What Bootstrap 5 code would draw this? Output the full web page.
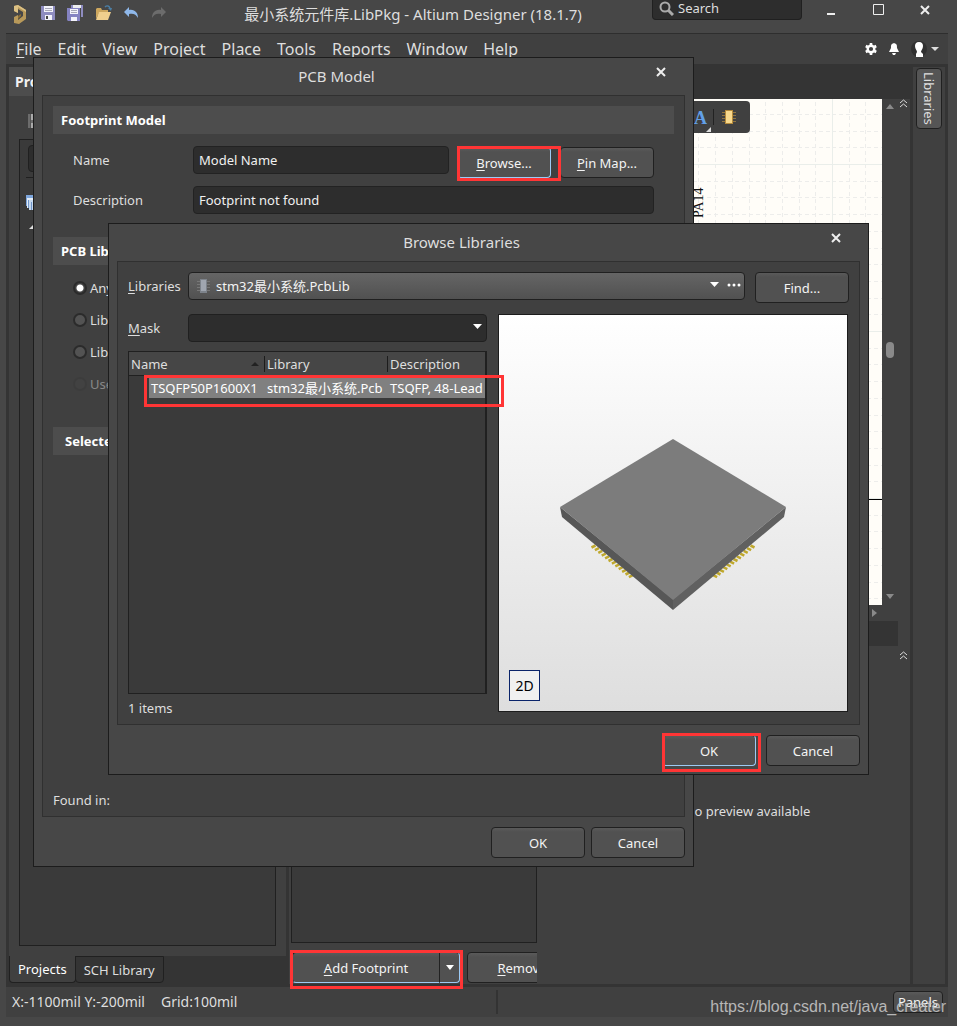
<!DOCTYPE html>
<html lang="en">
<head>
<meta charset="utf-8">
<meta name="viewport" content="width=device-width, initial-scale=1">
<title>最小系统元件库.LibPkg - Altium Designer (18.1.7)</title>
<link href="https://cdn.jsdelivr.net/npm/bootstrap@5.3.0/dist/css/bootstrap.min.css" rel="stylesheet">
<style>
:root{--frame:#474747;--panel:#404040;--gutter:#343434;--well:#3a3a3a;--edge:#202020;--field:#2d2d2d;--ink:#dedede}
body{background:var(--frame);color:var(--ink);font:13px/20px "Noto Sans","Noto Sans CJK SC",sans-serif;height:100vh;min-height:1000px;overflow:hidden}
button,input,select{font:inherit;color:inherit}
svg{display:block;flex:none}
u{text-underline-offset:2px}
.app{height:100%;padding:0 9px 9px 6px}
.titlebar{height:33px}
.titlebar h1{font-size:15px;line-height:20px;font-weight:400}
.plain{background:none;border:0;padding:0}
.tools{gap:12px;padding-left:7px}
.logo{margin-top:5px}
.finder{width:150px;height:20px;background:var(--field);border:1px solid var(--edge);border-top:0;border-radius:0 0 4px 4px;padding:0 6px 3px}
.finder input{background:none;border:0;outline:0;padding:0;min-width:0;line-height:16px}
.finder input::placeholder{color:var(--ink);opacity:1}
.winctl{width:146px;padding:0 18px 0 24px}
.menubar{height:31px;background:var(--panel);border-top:1px solid #2e2e2e;padding:0 9px 0 10px}
.menubar nav{gap:16px;font-size:16px}
.menubar a{color:var(--ink);text-decoration:none}
.work{background:var(--gutter);padding:0 3px;gap:3px;min-height:0}
.dock-left{width:277px;padding:3px 0 4px}
.dock-head{height:29px;background:#4d4d4d;padding-left:6px;font-weight:700;line-height:29px;font-size:14px;color:#f2f2f2}
.dock-body{background:var(--panel);padding:0 10px 10px;min-height:0}
.dock-tools{height:43px;padding:18px 0 0 9px}
.well{background:var(--well);border:1px solid var(--edge)}
.tree-field{height:27px;margin:5px 8px;background:var(--field);border:1px solid var(--edge);border-radius:4px}
.tree-icons{margin:5px 6px 0;border-top:1px solid var(--edge);padding-top:17px}
.dock-tabs button{height:27px;border:1px solid var(--edge);border-top:0;border-radius:0 0 4px 4px;background:none;padding:0 8px;margin-right:-1px}
.dock-tabs .on{background:var(--panel);color:#fff}
.dock-tabs button+button{border-top:1px solid var(--edge)}
.sheet{height:506px;background:#fffdf8}
.doc-strip{height:35px}
.doc{background:var(--panel);min-height:0;margin-bottom:3px}
.scrolls{width:28px;position:relative}
.split-strip{height:25px;background:var(--gutter);margin-right:12px}
.hscroll{height:16px;padding-right:33px}
.sheet-tools{position:absolute;right:160px;top:2px;height:32px;width:90px;background:var(--panel);border-radius:4px;padding-right:14px;gap:8px}
.models{width:248px;overflow:hidden;padding:0 0 0 2px}
.model-buttons{height:32px;margin-top:9px;gap:7px;padding-left:1px}
.dock-right{width:32px;background:var(--panel);margin-top:3px;margin-bottom:3px;padding:1px 3px}
.side-tab{writing-mode:vertical-rl;width:26px;height:61px;background:#555;border:1px solid var(--edge);border-radius:4px;padding:0;line-height:20px}
.status{height:30px;background:var(--panel);padding:0 5px 0 6px}
.status-text{width:52%;font-size:14px}
.status .rule{width:2px;height:24px;background:#333}
.btn-dk{height:31px;min-width:94px;background:linear-gradient(#5a5a5a,#515151 4px,#515151);border:1px solid var(--edge);border-radius:4px;color:#f4f4f4;padding:0 8px;white-space:nowrap}
.btn-dk.focus{border-color:#222 #9ccaf5 #9ccaf5 #222}
.note{position:absolute;border:3px solid #ff3535;pointer-events:none;z-index:2}
.window{position:absolute;background:var(--frame);border:1px solid #1c1c1c;padding:0 8px 8px}
.window-head{height:37px}
.window-head h2{font-size:15px;line-height:37px;font-weight:400;margin:0;padding-right:22px}
.window-head button{width:16px;height:16px;margin-top:6px}
.window-body{background:var(--panel);border:1px solid #303030;padding:10px 10px 6px}
.window-foot{padding-top:10px;gap:6px}
.pcb{left:33px;top:57px;width:661px;height:810px}
.libs{left:108px;top:223px;width:761px;height:552px}
.section-head{height:28px;background:#4d4d4d;color:#fff;font-weight:700;font-size:13px;line-height:28px;margin:0;padding-left:8px}
.fields{padding:12px 20px 23px;display:grid;row-gap:12px}
.fields label{width:120px;line-height:28px;flex:none}
.fields .btn-dk{margin:1px 0 -4px}
.field{height:28px;background:var(--field);border:1px solid #222;border-radius:4px;padding:0 5px 1px;outline:0;color:#f0f0f0}
.choices{padding:13px 20px 33px;display:grid;row-gap:12px}
.choices label{height:20px;gap:3px;line-height:22px}
.choices input{appearance:none;width:14px;height:14px;margin:0;border:2px solid #2b2b2b;border-radius:50%;background:#535353;flex:none}
.choices input:checked{background:radial-gradient(#fff 3px,#444 4px)}
.choices .off{opacity:.45}
.choices .off input{opacity:.3}
.picker{appearance:none;height:28px;width:100%;border:1px solid var(--edge);border-radius:4px;color:#f4f4f4;padding:0 0 0 27px;outline:0}
.picker.grad{background:linear-gradient(#656565,#515151)}
.picker.flat{background:var(--field)}
.lead-label{width:60px;line-height:28px;flex:none}
.left-col{width:359px}
.list{height:343px;border-right-width:2px;overflow:hidden;margin-top:9px}
.count{padding-top:4px;margin-bottom:-8px}
.list table{table-layout:fixed;width:357px;line-height:20px;color:var(--ink);border-collapse:separate;border-spacing:0}
.list th{font-weight:400;height:24px;padding:0 2px;background:#464646;border-bottom:1px solid var(--edge);position:relative}
.list th+th::before{content:"";position:absolute;left:-1px;top:4px;height:16px;width:1px;background:#1c1c1c}
.list td{height:22px;padding:0 2px;white-space:nowrap;overflow:hidden;background:#808080;color:#fff;line-height:20px;border-top:1px solid var(--well)}
.list td:first-child{background:none}
.view3d{background:linear-gradient(#fff,#dedede);border:1px solid #1c1c1c;height:398px;margin-right:1px}
.view3d svg.body3d{width:100%;height:100%}
.flip{position:absolute;left:10px;bottom:10px;width:31px;height:31px;background:#f0f0f0;border:1px solid #0a246a;color:#000;padding:0;font-size:14px}
.stamp{position:absolute;right:11px;bottom:7px;font:16px/24px "Liberation Sans",sans-serif;color:#c4c4c4;opacity:.9;z-index:3}
</style>
</head>
<body>
<div class="app d-flex flex-column position-relative">
  <header class="titlebar d-flex align-items-start">
    <div class="tools d-flex align-items-center">
      <svg class="logo" width="16" height="20" viewBox="0 0 16 20"><path d="M1 1 5 0l8 5v9l-7 5-5-1v-6l4-2v5l5-4V7L5 4v4L1 6z" fill="#b8995a"/><path d="M1 1 5 0l8 5v2L5 2v6L1 6z" fill="#dcc184"/><path d="M5 11l3-2v2l-3 3z" fill="#8a6d35"/></svg>
      <button class="plain" aria-label="Save"><svg width="14" height="14" viewBox="0 0 14 14"><path d="M0 0h14v14H1l-1-1z" fill="#8e8cc0"/><path d="M3 0h9v6H3zM4 9h7v5H4z" fill="#f3f3fb"/><path d="M4 2h7v1H4zM4 4h7v1H4z" fill="#a8a8b8"/><path d="M5 10h2v3H5z" fill="#444"/></svg></button>
      <button class="plain" aria-label="Save all"><svg width="16" height="16" viewBox="0 0 16 16"><path d="M4 0h12v12h-2V3H4z" fill="#8e8cc0"/><path d="M6 0h8v3H6z" fill="#eee"/><path d="M0 3h13v13H1l-1-1z" fill="#8583c2"/><path d="M3 4h8v5H3zM4 12h6v4H4z" fill="#f3f3fb"/><path d="M4 5h6v1H4zM4 7h6v1H4z" fill="#a8a8b8"/></svg></button>
      <button class="plain" aria-label="Open"><svg width="17" height="16" viewBox="0 0 17 16"><path d="M1 4l1-1h4l1 2h6v3H4l-3 6z" fill="#cda75e"/><path d="M4 7h12l-3 8H1z" fill="#f0cf8d"/><path d="M10 2c2-2 4-1 5 1" fill="none" stroke="#4b7fa5" stroke-width="1.4"/><path d="M13 3h4l-1 3z" fill="#4b7fa5"/></svg></button>
      <button class="plain" aria-label="Undo"><svg width="15" height="12" viewBox="0 0 15 12"><path d="M5 0v3c6-1 9 3 9 8-2-4-5-5-9-4v3L0 5z" fill="#8fb8ea"/></svg></button>
      <button class="plain" aria-label="Redo"><svg width="15" height="12" viewBox="0 0 15 12"><path d="M10 0v3C4 2 1 6 1 11c2-4 5-5 9-4v3l5-5z" fill="#6c6c6c"/></svg></button>
    </div>
    <h1 class="flex-fill text-center m-0 mt-1 ps-2">最小系统元件库.LibPkg - Altium Designer (18.1.7)</h1>
    <div class="finder d-flex align-items-center gap-1">
      <svg width="15" height="15" viewBox="0 0 15 15"><circle cx="6" cy="6" r="4.5" fill="none" stroke="#aaa" stroke-width="2"/><path d="M9 9l5 5" stroke="#aaa" stroke-width="3"/></svg>
      <input type="search" placeholder="Search" aria-label="Search" class="w-100">
    </div>
    <div class="winctl d-flex justify-content-between pt-1">
      <button class="plain" aria-label="Minimize"><svg width="10" height="11"><path d="M1 10h8" stroke="#eee" stroke-width="2"/></svg></button>
      <button class="plain" aria-label="Maximize"><svg width="11" height="11"><path d="M.5.5h10v10H.5z" fill="none" stroke="#eee"/></svg></button>
      <button class="plain" aria-label="Close"><svg width="10" height="10"><path d="M1 1l8 8M9 1L1 9" stroke="#eee" stroke-width="2"/></svg></button>
    </div>
  </header>

  <div class="menubar d-flex align-items-center justify-content-between">
    <nav class="d-flex">
      <a href="#"><u>F</u>ile</a><a href="#"><u>E</u>dit</a><a href="#"><u>V</u>iew</a><a href="#">Proje<u>c</u>t</a><a href="#"><u>P</u>lace</a><a href="#"><u>T</u>ools</a><a href="#"><u>R</u>eports</a><a href="#"><u>W</u>indow</a><a href="#"><u>H</u>elp</a>
    </nav>
    <div class="d-flex align-items-center gap-2">
      <button class="plain pe-1" aria-label="Settings"><svg width="12" height="12" viewBox="0 0 12 12"><circle cx="6" cy="6" r="3.3" fill="none" stroke="#fff" stroke-width="2.4"/><path d="M6 0v2M6 10v2M.8 3l1.8 1M9.4 8l1.8 1M.8 9l1.8-1M9.4 4l1.8-1" stroke="#fff" stroke-width="2.6"/></svg></button>
      <button class="plain" aria-label="Notifications"><svg width="10" height="12" viewBox="0 0 10 12"><path d="M5 0c3 1 3 2 3 5l2 4H0l2-4c0-3 0-4 3-5z" fill="#fff"/><path d="M3 10h4l-1 2H4z" fill="#fff"/></svg></button>
      <button class="plain d-flex align-items-center gap-1 ps-1" aria-label="Account"><svg width="16" height="16" viewBox="0 0 16 16"><circle cx="8" cy="8" r="8" fill="#303030"/><path d="M8 1c3 0 4 2 4 4 0 3-2 4-2 6l2 2v3H5v-3l1-2c0-2-2-3-2-6 0-2 1-4 4-4z" fill="#fff"/></svg><svg width="8" height="4"><path d="M0 0h8L4 4z" fill="#ddd"/></svg></button>
    </div>
  </div>

  <main class="work d-flex flex-fill">
    <aside class="dock-left d-flex flex-column flex-shrink-0">
      <div class="dock-head">Projects</div>
      <div class="dock-body d-flex flex-column flex-fill">
        <div class="dock-tools"><svg width="14" height="14" viewBox="0 0 14 14"><path d="M0 0h14v14H0z" fill="#6c6c6c"/><path d="M3 0h8v6H3zM3 9h8v5H3z" fill="#aaa"/><path d="M2 0h1v14H2z" fill="#555"/></svg></div>
        <div class="well flex-fill">
          <div class="tree-field"></div>
          <div class="tree-icons"><svg width="20" height="36" viewBox="0 0 20 36"><path d="M0 0h14v11H0z" fill="#7ea6dc"/><path d="M1 3h14v10H1z" fill="#e3edf8"/><path d="M3 5h12v10H3z" fill="#c5d8ee"/><path d="M2.500 5v8M5.500 7v8" stroke="#6f94c8"/><path d="M8 29v5H3z" fill="#ddd"/></svg></div>
        </div>
      </div>
      <div class="dock-tabs d-flex"><button class="on">Projects</button><button>SCH Library</button></div>
    </aside>

    <section class="flex-fill d-flex flex-column">
      <div class="doc-strip flex-shrink-0"></div>
      <div class="doc d-flex flex-column flex-fill">
        <div class="d-flex position-relative">
          <svg class="sheet flex-fill" width="100" height="506">
            <defs>
              <pattern id="grid" x="543" y="65" width="167" height="167" patternUnits="userSpaceOnUse">
                <path d="M17.5 0v167M33.5 0v167M50.5 0v167M67.5 0v167M84.5 0v167M100.5 0v167M117.5 0v167M134.5 0v167M150.5 0v167M0 17.5h167M0 33.5h167M0 50.5h167M0 67.5h167M0 84.5h167M0 100.5h167M0 117.5h167M0 134.5h167M0 150.5h167" stroke="#ededeb" stroke-dasharray="4 3" fill="none"/>
                <path d="M.5 0v167M0 .5h167" stroke="#eaeeea"/>
              </pattern>
            </defs>
            <rect width="100%" height="100%" fill="url(#grid)"/>
            <path d="M400 400.500h193" stroke="#000"/>
            <text transform="translate(414 119) rotate(-90)" font-family="Liberation Serif" font-size="14" fill="#111">PA14</text>
          </svg>
          <div class="scrolls">
            <svg width="28" height="506" viewBox="0 0 28 506"><path d="M4 10h8L8 5zM4 495h8l-4 5z" fill="#8a8a8a"/><rect x="4" y="243" width="8" height="16" rx="4" fill="#8a8a8a"/><path d="M18 4l3.500-3 3.500 3M18 8l3.500-3 3.500 3" fill="none" stroke="#ddd"/></svg>
          </div>
          <div class="sheet-tools d-flex align-items-center justify-content-end">
            <svg width="20" height="32" viewBox="0 0 20 32"><text x="0" y="23" font-family="Liberation Serif" font-weight="700" font-size="18" fill="#62a0e8">A</text><path d="M17 26v5h-5z" fill="#ddd"/><path d="M19.500 8v16" stroke="#222"/></svg>
            <svg width="14" height="14" viewBox="0 0 14 14"><path d="M0 2.500h14M0 5.500h14M0 8.500h14M0 11.500h14" stroke="#8f7440"/><path d="M3 0h8v14H3z" fill="#b48a3c"/><path d="M4 1h6v12H4z" fill="#f8d98d"/></svg>
          </div>
        </div>
        <div class="hscroll d-flex align-items-center justify-content-end"><svg width="5" height="8"><path d="M0 0l5 4-5 4z" fill="#8a8a8a"/></svg></div>
        <div class="split-strip"></div>
        <div class="d-flex flex-fill position-relative">
          <svg class="position-absolute end-0 top-0 mt-1" width="10" height="14" viewBox="0 0 10 14"><path d="M0 5l3.500-3L7 5M0 9l3.500-3 3.500 3" fill="none" stroke="#ddd"/></svg>
          <div class="models d-flex flex-column flex-shrink-0">
            <div class="well flex-fill"></div>
            <div class="model-buttons d-flex flex-shrink-0">
              <div class="btn-group flex-shrink-0">
                <button class="btn-dk focus rounded-end-0 border-end-0" style="width:147px"><u>A</u>dd Footprint</button>
                <button class="btn-dk focus rounded-start-0 p-0" style="min-width:21px;border-left-color:#222" aria-label="More footprints"><svg class="m-auto" width="8" height="5"><path d="M0 0h8L4 5z" fill="#fff"/></svg></button>
              </div>
              <button class="btn-dk flex-shrink-0" style="width:110px"><u>R</u>emove</button>
            </div>
          </div>
          <div class="flex-fill d-flex align-items-center justify-content-center ps-5 pb-2">No preview available</div>
        </div>
      </div>
    </section>

    <aside class="dock-right flex-shrink-0"><button class="side-tab">Libraries</button></aside>
  </main>

  <footer class="status d-flex align-items-center">
    <div class="status-text d-flex gap-3"><span>X:-1100mil Y:-200mil</span><span>Grid:100mil</span></div>
    <div class="rule"></div>
    <button class="btn-dk h-auto px-1 ms-auto" style="min-width:50px">Panels</button>
  </footer>
  <div class="note" style="left:290px;top:950px;width:173px;height:39px;z-index:1"></div>

  <section class="window pcb d-flex flex-column" aria-label="PCB Model">
    <div class="window-head d-flex">
      <h2 class="flex-fill text-center">PCB Model</h2>
      <button class="plain me-3" aria-label="Close"><svg class="m-auto" width="10" height="10"><path d="M1 1l8 8M9 1L1 9" stroke="#eee" stroke-width="2"/></svg></button>
    </div>
    <div class="window-body flex-fill d-flex flex-column">
      <h3 class="section-head">Footprint Model</h3>
      <div class="fields">
        <div class="d-flex align-items-start">
          <label for="mname">Name</label>
          <input id="mname" class="field flex-fill" value="Model Name">
          <div class="position-relative d-flex ms-2"><button class="btn-dk focus"><u>B</u>rowse...</button><span class="note" style="inset:0 -10px -7px 0"></span></div>
          <button class="btn-dk" style="margin-left:9px"><u>P</u>in Map...</button>
        </div>
        <div class="d-flex"><label for="mdesc">Description</label><input id="mdesc" class="field flex-fill" value="Footprint not found"></div>
      </div>
      <h3 class="section-head">PCB Library</h3>
      <div class="choices">
        <label class="d-flex align-items-center"><input type="radio" name="lib" checked>Any</label>
        <label class="d-flex align-items-center"><input type="radio" name="lib">Library name</label>
        <label class="d-flex align-items-center"><input type="radio" name="lib">Library path</label>
        <label class="d-flex align-items-center off"><input type="radio" name="lib" disabled>Use footprint</label>
      </div>
      <h3 class="section-head ps-2"><span class="ps-1">Selected Footprint</span></h3>
      <div class="mt-auto">Found in:</div>
    </div>
    <div class="window-foot d-flex justify-content-end"><button class="btn-dk">OK</button><button class="btn-dk">Cancel</button></div>
  </section>

  <section class="window libs d-flex flex-column" aria-label="Browse Libraries">
    <div class="window-head d-flex">
      <h2 class="flex-fill text-center">Browse Libraries</h2>
      <button class="plain me-3" aria-label="Close"><svg class="m-auto" width="10" height="10"><path d="M1 1l8 8M9 1L1 9" stroke="#eee" stroke-width="2"/></svg></button>
    </div>
    <div class="window-body flex-fill">
      <div class="d-flex align-items-start">
        <label class="lead-label" for="lib"><u>L</u>ibraries</label>
        <div class="flex-fill position-relative">
          <select id="lib" class="picker grad"><option>stm32最小系统.PcbLib</option></select>
          <svg class="position-absolute" style="left:9px;top:7px" width="13" height="14" viewBox="0 0 13 14"><path d="M0 2.500h13M0 5.500h13M0 8.500h13M0 11.500h13" stroke="#777"/><path d="M3 0h7v14H3z" fill="#7d838b"/><path d="M4 1h5v11H4z" fill="#a0a6b0"/></svg>
          <svg class="position-absolute" style="right:4px;top:10px" width="31" height="6"><path d="M0 0h9L4.500 5z" fill="#fff"/><circle cx="19" cy="3" r="1.500" fill="#fff"/><circle cx="24" cy="3" r="1.500" fill="#fff"/><circle cx="29" cy="3" r="1.500" fill="#fff"/></svg>
        </div>
        <button class="btn-dk" style="margin-left:10px">Find...</button>
      </div>
      <div class="d-flex align-items-start" style="margin-top:11px;gap:11px">
        <div class="left-col flex-shrink-0">
          <div class="d-flex">
            <label class="lead-label" for="mask"><u>M</u>ask</label>
            <div class="flex-fill position-relative"><select id="mask" class="picker flat"><option></option></select><svg class="position-absolute" style="right:5px;top:10px" width="9" height="5"><path d="M0 0h9L4.500 5z" fill="#fff"/></svg></div>
          </div>
          <div class="position-relative">
            <div class="list well">
              <table>
                <colgroup><col style="width:20px"><col style="width:116px"><col style="width:123px"><col></colgroup>
                <thead><tr><th colspan="2">Name<svg class="position-absolute" style="right:6px;top:10px" width="8" height="4"><path d="M0 4h8L4 0z" fill="#222"/></svg></th><th>Library</th><th>Description</th></tr></thead>
                <tbody><tr><td></td><td>TSQFP50P1600X1</td><td>stm32最小系统.Pcb</td><td>TSQFP, 48-Lead</td></tr></tbody>
              </table>
            </div>
            <span class="note" style="left:16px;top:24px;right:-17px;height:32px"></span>
          </div>
          <div class="count">1 items</div>
        </div>
        <div class="view3d flex-fill position-relative">
          <svg class="body3d" viewBox="499 315 348 396">
            <path d="M591.500 547.500l4-2m-.6 4.700l4-2m-.6 4.700l4-2m-.6 4.700l4-2m-.6 4.700l4-2m-.6 4.700l4-2m-.6 4.700l4-2m-.6 4.700l4-2m-.6 4.700l4-2m-.6 4.700l4-2m-.6 4.700l4-2m-.6 4.700l4-2" stroke="#bfa82d" stroke-width="2.600"/>
            <path d="M754.500 547.500l-4-2m.6 4.700l-4-2m.6 4.700l-4-2m.6 4.700l-4-2m.6 4.700l-4-2m.6 4.700l-4-2m.6 4.700l-4-2m.6 4.700l-4-2m.6 4.700l-4-2m.6 4.700l-4-2m.6 4.700l-4-2m.6 4.700l-4-2" stroke="#bfa82d" stroke-width="2.600"/>
            <path d="M560 507l2 10 111 93v-11z" fill="#575757"/><path d="M786 507l-2 10-111 93v-11z" fill="#606060"/>
            <path d="M673 439l113 68-113 93-113-93z" fill="#7c7c7c"/>
          </svg>
          <button class="flip">2D</button>
        </div>
      </div>
    </div>
    <div class="window-foot d-flex justify-content-end"><div class="position-relative me-1 d-flex"><button class="btn-dk focus">OK</button><span class="note" style="inset:-2px -5px -6px 0"></span></div><button class="btn-dk">Cancel</button></div>
  </section>

  <div class="stamp">https://blog.csdn.net/java_creater</div>
</div>
<script src="https://cdn.jsdelivr.net/npm/bootstrap@5.3.0/dist/js/bootstrap.bundle.min.js"></script>
</body>
</html>
